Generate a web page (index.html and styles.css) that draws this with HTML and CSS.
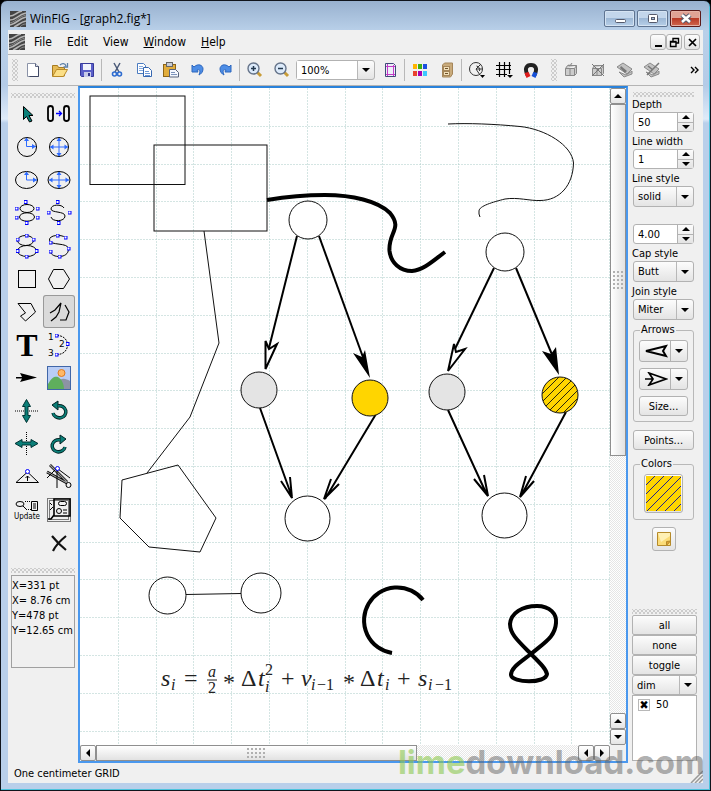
FILE: index.html
```html
<!DOCTYPE html>
<html lang="en">
<head>
  <meta charset="UTF-8">
  <title>WinFIG - [graph2.fig*]</title>
  <link rel="stylesheet" href="styles.css">
</head>
<body>

<svg class="defs" width="0" height="0" aria-hidden="true">
  <defs>
    <marker id="knot" markerWidth="4" markerHeight="4" refX="2" refY="2" markerUnits="userSpaceOnUse">
      <rect x="0.5" y="0.5" width="3" height="3" fill="#fff" stroke="#00f"/>
    </marker>
    <pattern id="hatch" width="8" height="8" patternUnits="userSpaceOnUse">
      <rect width="8" height="8" fill="#ffd500"/>
      <path d="M-1 9L9 -1M-1 1L1 -1M7 9L9 7" stroke="#111" stroke-width="0.9"/>
    </pattern>
    <pattern id="hatchBlue" width="9" height="9" patternUnits="userSpaceOnUse">
      <rect width="9" height="9" fill="#ffd500"/>
      <path d="M-1 10L10 -1M-1 1L1 -1M8 10L10 8" stroke="#22228a"/>
    </pattern>
    <symbol id="logo" viewBox="0 0 16 16">
      <rect width="16" height="16" fill="#444"/>
      <path d="M0 5C5 5 6 1 12 0M0 9C7 9 7 4 16 2M0 14C8 12 8 8 16 6M4 16C9 14 10 11 16 10" fill="none" stroke="#b5b5b5" stroke-width="1.6"/>
      <path d="M0 12C7 10 8 6 16 4M10 16C12 14 13 13 16 13" fill="none" stroke="#888"/>
    </symbol>
  </defs>
</svg>

<div class="window">

  <header class="titlebar">
    <svg class="logo"><use href="#logo"/></svg>
    <h1>WinFIG - [graph2.fig*]</h1>
    <div class="win-buttons">
      <button aria-label="Minimize"><svg width="12" height="12"><rect x="1.5" y="6.5" width="10" height="3" rx="1" fill="#fff" stroke="#555a6c"/></svg></button>
      <button aria-label="Maximize"><svg width="12" height="12"><rect x="1.5" y="1.5" width="9" height="8" rx="1" fill="#fff" stroke="#555a6c"/><rect x="4.5" y="4.5" width="3" height="2" fill="#a8c0dc" stroke="#555a6c"/></svg></button>
      <button class="close" aria-label="Close"><svg width="12" height="12"><path d="M2 2l8 7M10 2l-8 7" stroke="#555a6c" stroke-width="4.5"/><path d="M2 2l8 7M10 2l-8 7" stroke="#fff" stroke-width="2.5"/></svg></button>
    </div>
  </header>

  <nav class="menubar">
    <svg class="logo"><use href="#logo"/></svg>
    <button>File</button>
    <button>Edit</button>
    <button>View</button>
    <button><u>W</u>indow</button>
    <button><u>H</u>elp</button>
    <div class="mdi-buttons">
      <button aria-label="Minimize document"><svg width="11" height="11"><path d="M2 9h7" stroke="#000" stroke-width="2"/></svg></button>
      <button aria-label="Restore document"><svg width="11" height="11"><path d="M4 4V1.5h5.500V6H7.500M4 1.5h6M1.5 4.5h5.500v5h-5.500zM1 5h6.500" fill="none" stroke="#000" stroke-width="1.4"/></svg></button>
      <button class="gap" aria-label="Close document"><svg width="11" height="11"><path d="M2 2l7 7M9 2l-7 7" stroke="#000" stroke-width="1.7"/></svg></button>
    </div>
  </nav>

  <div class="toolbar">
    <span class="grip-v"></span>
    <button aria-label="New"><svg width="16" height="16"><path d="M2.500 1.500h8l3 3v10h-11z" fill="#fff" stroke="#8b93a8"/><path d="M13.500 4v10.500h-9" fill="none" stroke="#3f4763"/><path d="M10.500 1.500v3h3" fill="#d7dcea" stroke="#5d6580"/></svg></button>
    <button aria-label="Open"><svg width="18" height="16"><path d="M1.500 14V3.500h5l1 2h6V14z" fill="#e6bb55" stroke="#a77b20"/><path d="M1.500 14.500l4-7h11l-4 7z" fill="#fbdf87" stroke="#b98a28"/><path d="M9 3c2-2 5-2 6 1M16.500 1v4h-4" fill="none" stroke="#5b7fa8" stroke-width="1.300"/></svg></button>
    <button aria-label="Save"><svg width="16" height="16"><path d="M1.500 1.500h13v13h-12l-1-1z" fill="#5a5fc8" stroke="#36399a"/><rect x="4" y="2" width="8" height="6" fill="#f0f2fc"/><rect x="5" y="10" width="7" height="5" fill="#c7cbe8"/><rect x="9" y="11" width="2" height="3" fill="#30348c"/></svg></button>
    <span class="sep"></span>
    <button aria-label="Cut"><svg width="16" height="16"><path d="M5 1l5 9M11 1L6 10" stroke="#4b5a78" stroke-width="1.500"/><circle cx="5.500" cy="12" r="2" fill="none" stroke="#2e6cd0" stroke-width="1.600"/><circle cx="10.500" cy="12" r="2" fill="none" stroke="#2e6cd0" stroke-width="1.600"/></svg></button>
    <button aria-label="Copy"><svg width="16" height="16"><path d="M1.500 1.500h6l2 2v8h-8z" fill="#fff" stroke="#4a7bc0"/><path d="M3 4.500h4M3 6.500h5M3 8.500h5" stroke="#86aade"/><path d="M7.500 5.500h5l3 3v6h-8z" fill="#fff" stroke="#3566b0"/><path d="M9 9.500h4M9 11.500h5M9 13.500h5" stroke="#6d97d6"/></svg></button>
    <button aria-label="Paste"><svg width="16" height="16"><rect x="0.500" y="2.500" width="12" height="12" fill="#e2ad3c" stroke="#8d6416"/><rect x="3.500" y="0.500" width="6" height="4" fill="#c9cdd6" stroke="#666"/><path d="M6.500 7.500h6l3 3v4.500h-9z" fill="#f4f7fd" stroke="#56627a"/><path d="M8 10.500h4M8 12.500h6" stroke="#7c93ba"/></svg></button>
    <button aria-label="Undo"><svg width="16" height="16"><path d="M4 5c4-4 9-2 9 2 0 3-2 5-4 6 1-3 2-6-2-5l1 2-6 0V3z" fill="#4d8de6" stroke="#2c66bd"/></svg></button>
    <button aria-label="Redo"><svg width="16" height="16"><path d="M12 5C8 1 3 3 3 7c0 3 2 5 4 6-1-3-2-6 2-5l-1 2 6 0V3z" fill="#4d8de6" stroke="#2c66bd"/></svg></button>
    <span class="sep"></span>
    <button aria-label="Zoom in"><svg width="16" height="16"><path d="M10 10l4 4" stroke="#c89c38" stroke-width="3"/><circle cx="6.500" cy="6.500" r="5.500" fill="#dceafa" stroke="#66748a" stroke-width="1.400"/><path d="M4 6.500h5M6.500 4v5" stroke="#23384f" stroke-width="1.500"/></svg></button>
    <button aria-label="Zoom out"><svg width="16" height="16"><path d="M10 10l4 4" stroke="#c89c38" stroke-width="3"/><circle cx="6.500" cy="6.500" r="5.500" fill="#dceafa" stroke="#66748a" stroke-width="1.400"/><path d="M4 6.500h5" stroke="#23384f" stroke-width="1.500"/></svg></button>
    <div class="combo zoom">
      <select aria-label="Zoom"><option>100%</option></select>
    </div>
    <button aria-label="Page frame"><svg width="16" height="16"><path d="M3.500 1.500h8l2 2v11h-10z" fill="#eef0fa" stroke="#3f4a78"/><path d="M5.500 2v12M11.500 3v11M4 4.500h9M4 12.500h9" stroke="#c43cc8"/></svg></button>
    <span class="sep"></span>
    <button aria-label="Palette"><svg width="16" height="14"><path d="M1 1h4v5H1z" fill="#ffb400"/><path d="M6 1h4v5H6z" fill="#3eae14"/><path d="M11 1h4v5h-4z" fill="#1c50e0"/><path d="M1 8h4v5H1z" fill="#e8432e"/><path d="M6 8h4v5H6z" fill="#a800b0"/><path d="M11 8h4v5h-4z" fill="#3cc8ff"/></svg></button>
    <button aria-label="Library"><svg width="14" height="16"><path d="M2.500 3l2-2h8v11l-2 3h-8z" fill="#c9ab7c" stroke="#a5865a"/><rect x="3.500" y="4.500" width="6" height="4" fill="#f1dfb9" stroke="#a5865a"/><rect x="3.500" y="9.500" width="6" height="4" fill="#f1dfb9" stroke="#a5865a"/><path d="M5 6.500h3M5 11.500h3" stroke="#6f5228"/></svg></button>
    <span class="sep"></span>
    <button aria-label="Snap angle"><svg width="18" height="18"><circle cx="8" cy="8" r="6.500" fill="none" stroke="#333"/><path d="M8 8L13 3M8 8l4 6M8 8h6M8.500 5a4 4 0 0 1 3 5" fill="none" stroke="#333"/><path d="M12 14h5l-2.500 3z"/></svg></button>
    <button aria-label="Grid"><svg width="18" height="18"><path d="M4.500 1v15M9.500 1v15M14.500 1v12M1 4.500h15M1 8.500h15M1 13.500h11" stroke="#000" stroke-width="1.200"/><path d="M12 14h6l-3 3z"/></svg></button>
    <button aria-label="Magnet"><svg width="16" height="16"><path d="M4.500 13C1 6 4 3 8 3s7 3 3.500 10" fill="none" stroke="#222" stroke-width="4"/><path d="M1.500 11l4-1 2 4-4 2z" fill="#e01c1c"/><path d="M14.500 11l-4-1-2 4 4 2z" fill="#1650d8"/></svg></button>
    <span class="grip-v second"></span>
    <button aria-label="Group"><svg width="16" height="16"><path d="M2.500 6.500h9v7h-9zM11.500 13.500l2-2v-8l-2 3M2.500 6.500l2-3h9M7 6.500v7M5 3l2 1 2-3" fill="#ccc" stroke="#888"/></svg></button>
    <button aria-label="Ungroup"><svg width="16" height="16"><path d="M2.500 6.500h9v7h-9zM11.500 13.500l2-2v-8l-2 3M2.500 6.500l2-3h9M7 6.500v7" fill="#ccc" stroke="#888"/><path d="M2 2l12 12M14 2L2 14" stroke="#777"/></svg></button>
    <button aria-label="Open compound"><svg width="18" height="16"><path d="M1 5l6-4 9 6-5 5zM3 10l5 5 8-3v-3l-6 4z" fill="#c2c2c2" stroke="#8a8a8a"/><path d="M5 4l6 5-2 2-5-5z" fill="#777"/></svg></button>
    <button aria-label="Close compound"><svg width="18" height="16"><path d="M1 5l6-4 9 6-5 5zM3 10l5 5 8-3v-3l-6 4z" fill="#c2c2c2" stroke="#8a8a8a"/><path d="M16 1L4 13M5 4l5 4" stroke="#777" stroke-width="1.500"/></svg></button>
    <button class="more" aria-label="More tools"><svg width="9" height="9"><path d="M1 1l3 3-3 3M5 1l3 3-3 3" fill="none" stroke="#000" stroke-width="1.400"/></svg></button>
  </div>

  <main class="workspace">

    <aside class="left">
      <span class="grip-h"></span>
      <div class="tools">
        <button aria-label="Select"><svg viewBox="0 0 32 33"><path d="M12.500 9.500v13l3-3 3 5.500 2.500-1-3-5.500h4z" fill="#0b7f78" stroke="#000"/></svg></button>
        <button aria-label="Morph"><svg viewBox="0 0 32 33"><rect x="5" y="9" width="5" height="15" rx="2.500" fill="none" stroke="#000" stroke-width="1.800"/><rect x="21" y="9" width="5" height="15" rx="2.500" fill="none" stroke="#000" stroke-width="1.800"/><path d="M13 16.500h5M16 14l2.500 2.500L16 19" fill="none" stroke="#00f" stroke-width="1.300"/></svg></button>

        <button aria-label="Circle by radius"><svg viewBox="0 0 32 33"><circle cx="16" cy="17" r="9.500" fill="none" stroke="#000"/><path d="M15.500 8v8.500H25" fill="none" stroke="#2e6bff"/><path d="M13 11l2.500-3.500L18 11zM21 14l4 2.500-4 2.500z" fill="#2e6bff"/></svg></button>
        <button aria-label="Circle by diameter"><svg viewBox="0 0 32 33"><circle cx="16" cy="17" r="9.500" fill="none" stroke="#000"/><path d="M16 8v18M7 17h18" stroke="#2e6bff"/><path d="M13.500 11L16 7.500l2.500 3.500zM13.500 23l2.500 3.500 2.500-3.500zM21.500 14.500L25 17l-3.500 2.500zM10.500 14.500L7 17l3.500 2.500z" fill="#2e6bff"/></svg></button>

        <button aria-label="Ellipse by radius"><svg viewBox="0 0 32 33"><ellipse cx="15.500" cy="17" rx="11" ry="8.500" fill="none" stroke="#000"/><path d="M15.500 9v8H26" fill="none" stroke="#2e6bff"/><path d="M13 12l2.500-3.500L18 12zM22 14.500l4 2.500-4 2.500z" fill="#2e6bff"/></svg></button>
        <button aria-label="Ellipse by diameter"><svg viewBox="0 0 32 33"><ellipse cx="16" cy="17" rx="11" ry="8.500" fill="none" stroke="#000"/><path d="M16 9v16M6 17h20" stroke="#2e6bff"/><path d="M13.500 12L16 8.500l2.500 3.500zM13.500 22l2.500 3.500 2.500-3.500zM22.500 14.500L26 17l-3.500 2.500zM9.500 14.500L6 17l3.500 2.500z" fill="#2e6bff"/></svg></button>

        <button aria-label="Closed approximated spline"><svg viewBox="0 0 32 33"><ellipse cx="16" cy="12.500" rx="7" ry="4" fill="none" stroke="#000"/><ellipse cx="16" cy="21" rx="7.500" ry="4.200" fill="none" stroke="#000"/><polyline class="knots" points="14.500,6 5.500,12.500 26.500,12.500 5.500,21.500 26.500,21.500 15.500,27"/></svg></button>
        <button aria-label="Open approximated spline"><svg viewBox="0 0 32 33"><path d="M21 12c-2-4-13-4-13 1 0 4 14 2 14 7 0 6-13 6-14 1" fill="none" stroke="#000"/><polyline class="knots" points="14.500,6 5.500,16.500 26.500,16.500 15.500,27"/></svg></button>

        <button aria-label="Closed interpolated spline"><svg viewBox="0 0 32 33"><ellipse cx="14.500" cy="11.500" rx="8" ry="5" fill="none" stroke="#000"/><ellipse cx="16" cy="22" rx="9.500" ry="5.500" fill="none" stroke="#000"/><polyline class="knots" points="15.500,6.500 6.500,10.500 22.500,10.500 6.500,22 25.500,22 15.500,27.500"/></svg></button>
        <button aria-label="Open interpolated spline"><svg viewBox="0 0 32 33"><path d="M22.500 8.500C18 5 6 6 6.500 11c0 6 19 2 19 9 0 10-17 9-18 3" fill="none" stroke="#000"/><polyline class="knots" points="14.500,6.500 22.500,8.500 7.500,13.500 25.500,19.500 7.500,22.500 16.500,27.500"/></svg></button>

        <button aria-label="Rectangle"><svg viewBox="0 0 32 33"><rect x="7.500" y="8.500" width="17" height="17" fill="none" stroke="#000"/></svg></button>
        <button aria-label="Regular polygon"><svg viewBox="0 0 32 33"><path d="M10.500 7.500h10l6 9.500-6 9.500h-10L5.500 17z" fill="none" stroke="#000"/></svg></button>

        <button aria-label="Polygon"><svg viewBox="0 0 32 33"><path d="M7 8.500h13l4.500 8.500-10 9-5-5 5-3z" fill="none" stroke="#000"/></svg></button>
        <button class="active" aria-label="Polyline"><svg viewBox="0 0 32 33"><path d="M7 18l5-3 6-7-2 9-3 5-5 4M17 25h6l3-8-4-7" fill="none" stroke="#000" stroke-width="1.200"/></svg></button>

        <button aria-label="Text"><svg viewBox="0 0 32 33"><text x="16" y="28" text-anchor="middle" class="big-t">T</text></svg></button>
        <button aria-label="Arc"><svg viewBox="0 0 32 33"><path d="M14 7.500c14 0 14 19 0 19" fill="none" stroke="#000" stroke-dasharray="2 1"/><polyline class="knots" points="13.500,7.500 24.500,16 13.500,26.500"/><g class="digits"><text x="5" y="12">1</text><text x="16" y="19">2</text><text x="5" y="28">3</text></g></svg></button>

        <button aria-label="Arrow"><svg viewBox="0 0 32 33"><path d="M5 16h6l-2-4 17 4.500L9 21l2-3.500H5z"/></svg></button>
        <button aria-label="Picture"><svg viewBox="0 0 32 33"><rect x="4.500" y="5.500" width="23" height="23" fill="#b9cdf5" stroke="#4066a8"/><circle cx="18.500" cy="12" r="3.500" fill="#ffb866" stroke="#e07a1c"/><path d="M14 21c5-5 9-3 13-1v8H16z" fill="#8d93a5"/><path d="M5 23c4-7 7-8 10-7 4 2 6 8 6 12H5z" fill="#5fae5c"/></svg></button>

        <button aria-label="Flip vertical"><svg viewBox="0 0 32 33"><path d="M4 17h24" stroke="#000" stroke-dasharray="1 1"/><path d="M15.500 5.500l4 7h-2.500v9h2.500l-4 7-4-7h2.500v-9h-2.500z" fill="#0b7f78" stroke="#033"/></svg></button>
        <button aria-label="Rotate left"><svg viewBox="0 0 32 33"><path d="M10 19a6.500 6 0 1 0 5-7" fill="none" stroke="#022" stroke-width="3.500"/><path d="M15 7v9l-6-5z" fill="#0b7f78" stroke="#022"/><path d="M10 19a6.500 6 0 1 0 5-7" fill="none" stroke="#0b7f78" stroke-width="1.800"/></svg></button>

        <button aria-label="Flip horizontal"><svg viewBox="0 0 32 33"><path d="M15.500 5v24" stroke="#000" stroke-dasharray="1 1"/><path d="M4 16.500l7-4v2.500h9v-2.500l7 4-7 4v-2.500h-9v2.500z" fill="#0b7f78" stroke="#033"/></svg></button>
        <button aria-label="Rotate right"><svg viewBox="0 0 32 33"><path d="M22 20a6.500 6 0 1 1-5-7" fill="none" stroke="#022" stroke-width="3.500"/><path d="M17 8v9l6-5z" fill="#0b7f78" stroke="#022"/><path d="M22 20a6.500 6 0 1 1-5-7" fill="none" stroke="#0b7f78" stroke-width="1.800"/></svg></button>

        <button aria-label="Add point"><svg viewBox="0 0 32 33"><path d="M5 22.500L16.500 12 27.500 22.500zM16.500 21v-5M14.500 18l2-2 2 2" fill="none" stroke="#000"/><circle cx="16.500" cy="11.500" r="2" fill="#fff" stroke="#00f"/></svg></button>
        <button aria-label="Cut line"><svg viewBox="0 0 32 33"><path d="M7 5l17 17M4 12l20 11" stroke="#000" stroke-width="2.600"/><path d="M7 5l17 17M4 12l20 11" stroke="#999" stroke-width="1.200"/><path d="M14 8L4 18M14 10v18M15 9l12 9" stroke="#000"/><circle cx="25.500" cy="25" r="2.500" fill="none" stroke="#000"/><circle cx="14.500" cy="8.500" r="2" fill="#fff" stroke="#00f"/></svg></button>

        <button aria-label="Update"><svg viewBox="0 0 32 33"><ellipse cx="9" cy="11" rx="4" ry="2.500" fill="none" stroke="#000"/><path d="M12 13l4 4" stroke="#000"/><path d="M14 8.500h5M17 16.500h4" stroke="#000" stroke-dasharray="1 1"/><path d="M20.500 8.500h6v9h-6zM22 11h3M22 13h3M22 15h3" fill="none" stroke="#000"/><text x="16" y="26" text-anchor="middle" class="update">Update</text></svg></button>
        <button aria-label="Compound"><svg viewBox="0 0 32 33"><rect x="4.500" y="5.500" width="23" height="23" fill="none" stroke="#000" stroke-dasharray="1 1"/><rect x="6.500" y="7.500" width="19" height="19" fill="none" stroke="#000" stroke-dasharray="1 1"/><path d="M11 6h16v17H11zM11 22l-3 4h-3" fill="none" stroke="#000" stroke-width="1.600"/><rect x="15.500" y="8.500" width="8" height="4" rx="2" fill="none" stroke="#000"/><circle cx="16" cy="18" r="2.500" fill="none" stroke="#000"/><path d="M20 17h4M20 20h4M7 10l2 2M7 17l3-3" stroke="#000"/></svg></button>

        <span></span>
        <button aria-label="Delete"><svg viewBox="0 0 32 33"><path d="M9 10c4 5 9 10 14 14M23 10c-5 4-10 9-13 15" fill="none" stroke="#111" stroke-width="2.200"/></svg></button>
      </div>
      <span class="grip-h coords-grip"></span>
      <div class="coords">X=331 pt<br>X= 8.76 cm<br>Y=478 pt<br>Y=12.65 cm</div>
    </aside>

    <section class="view">
      <svg class="canvas">
        <g transform="translate(-80 -88)">
          <path class="grid-lines" d="M118 88v900M156 88v900M193 88v900M231 88v900M269 88v900M307 88v900M345 88v900M382 88v900M420 88v900M458 88v900M496 88v900M534 88v900M571 88v900M609 88v900"/>
          <path class="grid-lines" d="M80 126h900M80 164h900M80 201h900M80 239h900M80 277h900M80 315h900M80 353h900M80 390h900M80 428h900M80 466h900M80 504h900M80 542h900M80 579h900M80 617h900M80 655h900M80 693h900M80 731h900"/>

          <!-- boxes, line and polygon -->
          <g class="thin">
            <rect x="90" y="96" width="95" height="88.500"/>
            <rect x="154" y="145" width="113" height="86"/>
            <path d="M204 231l15 112-29 74-43 56"/>
            <path d="M122 480l56-15 38 53-16 34-51-5-29-29z"/>
            <path d="M186 594.500l55-1"/>
            <circle cx="167.500" cy="595.500" r="18.500"/>
            <circle cx="261" cy="593" r="20"/>
            <path d="M448 124C468 123 494 124 520 126.500C545 129 572 145 573.500 163C573 185 560 200.500 540 200.500C530 201 518 197 505 199C493 202 479 206 479 211V214L480 217"/>
          </g>

          <!-- left graph -->
          <g class="edge">
            <path d="M297 236l-28 112"/>
            <path d="M265.500 341l0 28 11.500-25-8 5z" fill="#fff"/>
            <path d="M319 236l45 124"/>
            <path d="M260 408l32 89M281 481l11 17-2-21"/>
            <path d="M376 414l-51 85M331 479l-7 20 15-15"/>
          </g>
          <path d="M353 353l9 4 3-7 5 28z"/>
          <g class="node">
            <circle cx="308" cy="220" r="19"/>
            <circle cx="259" cy="390" r="18" fill="#e4e4e4"/>
            <circle cx="370" cy="398" r="18" fill="#ffd500"/>
            <circle cx="307.500" cy="518.500" r="22.500"/>
          </g>

          <!-- right graph -->
          <g class="edge">
            <path d="M494 268l-40 83"/>
            <path d="M454 344l-6 27 17-22-9 3z" fill="#fff"/>
            <path d="M516 268l37 89"/>
            <path d="M448 410l39 85M474 479l14 17-4-21"/>
            <path d="M566 412l-45 84M526 476l-6 21 14-16"/>
          </g>
          <path d="M542 351l9 3 5-7 3 28z"/>
          <g class="node">
            <circle cx="505" cy="252" r="19"/>
            <circle cx="447" cy="392" r="18" fill="#e4e4e4"/>
            <circle cx="560" cy="395" r="18" fill="url(#hatch)"/>
            <circle cx="504.500" cy="515.500" r="22.500"/>
          </g>

          <!-- thick splines -->
          <g class="thick">
            <path d="M267 200C285 197 305 195 325 195C352 195 378 201 390 213C403 229 388 232 389.500 251C391 263 400 271 412 271C424 270 434 260 445 252"/>
            <path d="M423 600A33 33 0 1 0 392 653"/>
            <path d="M531 654C518 641 510 634 510 624C511 613 522 606 537 606C550 606 557 614 556 623C555 637 545 642 531 654C518 664 511 668 511 675C512 683 546 684 547 674C546 669 541 664 531 654z"/>
          </g>

          <!-- LaTeX text object -->
          <g class="formula">
            <text y="686"><tspan class="it" x="161">s</tspan><tspan class="it sm" x="171" y="690">i</tspan><tspan x="184" y="686">=</tspan></text>
            <text class="it sm" x="208" y="677">a</text>
            <text class="sm" x="208" y="693">2</text>
            <path d="M207 680h10" stroke="#222"/>
            <text y="686"><tspan x="223" y="690">*</tspan><tspan x="241" y="686">Δ</tspan><tspan class="it" x="258">t</tspan></text>
            <text class="sm" x="265" y="675">2</text>
            <text class="it sm" x="265" y="692">i</text>
            <text y="686"><tspan x="281">+</tspan><tspan class="it" x="301">v</tspan><tspan class="it sm" x="311" y="690">i</tspan><tspan class="sm" x="317">−1</tspan><tspan x="343" y="690">*</tspan><tspan x="360" y="686">Δ</tspan><tspan class="it" x="377">t</tspan><tspan class="it sm" x="385" y="690">i</tspan><tspan x="397" y="686">+</tspan><tspan class="it" x="418">s</tspan><tspan class="it sm" x="428" y="690">i</tspan><tspan class="sm" x="435">−1</tspan></text>
          </g>
        </g>
      </svg>

      <div class="scroll vertical">
        <button aria-label="Scroll up"><i class="tri up"></i></button>
        <div class="thumb"><span class="dots"></span></div>
        <div class="track"></div>
        <button aria-label="Scroll up"><i class="tri up"></i></button>
        <button aria-label="Scroll down"><i class="tri down"></i></button>
      </div>
      <div class="scroll horizontal">
        <button aria-label="Scroll left"><i class="tri prev"></i></button>
        <div class="thumb"><span class="dots"></span></div>
        <div class="track"></div>
        <button aria-label="Scroll left"><i class="tri prev"></i></button>
        <button aria-label="Scroll right"><i class="tri next"></i></button>
      </div>
    </section>

    <aside class="right">
      <div class="props">
        <span class="grip-h"></span>
        <label for="depth">Depth</label>
        <div class="spin"><input id="depth" value="50"><div><button aria-label="Depth up"><i class="tri up"></i></button><button aria-label="Depth down"><i class="tri down"></i></button></div></div>
        <label for="lineWidth">Line width</label>
        <div class="spin"><input id="lineWidth" value="1"><div><button aria-label="Width up"><i class="tri up"></i></button><button aria-label="Width down"><i class="tri down"></i></button></div></div>
        <label for="lineStyle">Line style</label>
        <div class="combo"><select id="lineStyle"><option>solid</option></select></div>
        <div class="spin dash"><input aria-label="Dash length" value="4.00"><div><button aria-label="Dash up"><i class="tri up"></i></button><button aria-label="Dash down"><i class="tri down"></i></button></div></div>
        <label for="capStyle">Cap style</label>
        <div class="combo"><select id="capStyle"><option>Butt</option></select></div>
        <label for="joinStyle">Join style</label>
        <div class="combo"><select id="joinStyle"><option>Miter</option></select></div>

        <fieldset class="arrows">
          <legend>Arrows</legend>
          <button class="split" aria-label="Backward arrow"><svg width="24" height="14"><path d="M2 7l20-5-3 5 3 5z" fill="none" stroke="#000" stroke-width="2"/></svg><i class="tri down"></i></button>
          <button class="split" aria-label="Forward arrow"><svg width="24" height="14"><path d="M1 7h8M5 1l17 6-17 6 4-6z" fill="none" stroke="#000" stroke-width="1.700"/></svg><i class="tri down"></i></button>
          <button>Size...</button>
        </fieldset>
        <button class="points">Points...</button>
        <fieldset class="colors">
          <legend>Colors</legend>
          <button class="swatch" aria-label="Fill color"><svg width="35" height="35"><rect width="35" height="35" fill="url(#hatchBlue)"/></svg></button>
        </fieldset>
        <button class="note" aria-label="Comment"><svg width="14" height="14"><path d="M0.500 0.500h13v13h-13z" fill="#fbdc78" stroke="#b58a2a"/><path d="M1 1h12v3L4 10z" fill="#fff0b4"/><path d="M13.500 9l-4 4.500v-4z" fill="#e0a030" stroke="#b58a2a"/></svg></button>
      </div>

      <div class="depths">
        <span class="grip-h"></span>
        <button>all</button>
        <button>none</button>
        <button>toggle</button>
        <div class="combo"><select aria-label="Inactive layers"><option>dim</option></select></div>
        <div class="list"><label><input type="checkbox" checked>50</label></div>
      </div>
    </aside>
  </main>

  <footer class="status">
    <span>One centimeter GRID</span>
    <svg width="13" height="13"><path d="M1 13L13 1M5 13l8-8M9 13l4-4" stroke="#999" stroke-width="1.500"/></svg>
  </footer>

  <div class="watermark"><span>lime</span>download.com</div>
</div>

</body>
</html>
```
FILE: styles.css
```css
* {margin:0;padding:0;box-sizing:border-box;}
body {
  background: #000;
  color: #000;
  font-family: "DejaVu Sans Condensed", "Noto Sans", sans-serif;
  font-size: 11px;
  line-height: 15px;
}
button, select, input {
  font: inherit;
  color: inherit;
  background: none;
  border: none;
}
svg { display: block; flex: none; }
.defs { position: absolute; }

/* window frame */
.window {
  position: relative;
  min-height: 100vh;
  display: flex;
  flex-direction: column;
  padding: 0 7px 7px;
  border: 1px solid #10141c;
  border-radius: 7px 7px 0 0;
  background: linear-gradient(#98b1cf, #b9d0e9 30px, #b4cbe7 84px, #dfebf9 118px, #b9cfea 122px);
  box-shadow: inset -1px -1px #4cc3dc;
}
.titlebar {
  height: 29px;
  display: flex;
  align-items: center;
  gap: 4px;
  padding: 6px 2px 0;
}
.titlebar h1 {
  flex: 1;
  font: 12px/16px "Open Sans", "Noto Sans", sans-serif;
}
.logo { width: 16px; height: 16px; }
.win-buttons { display: flex; gap: 2px; }
.win-buttons button {
  width: 31px;
  height: 17px;
  display: flex;
  justify-content: center;
  align-items: center;
  border: 1px solid #5f7491;
  border-radius: 2px;
  background: linear-gradient(#c3d6eb 45%, #9db8d6 50%, #b7cfe8);
  box-shadow: inset 0 0 0 1px #d5e3f2;
}
.win-buttons .close {
  border-color: #5c1a1a;
  background: linear-gradient(#e0a295 45%, #b93a27 50%, #d0664e);
  box-shadow: inset 0 0 0 1px #e5b1a6;
}

.menubar {
  height: 25px;
  display: flex;
  align-items: center;
  padding: 0 3px 0 1px;
  gap: 15px;
  background: #f0f0f0;
  border-bottom: 1px solid #b4b4b4;
}
.menubar .logo { margin-right: -6px; }
.menubar > button { font-size: 12px; }
.mdi-buttons { display: flex; margin-left: auto; }
.mdi-buttons button, .arrows button, .points, .note, .swatch, .depths button {
  display: flex;
  justify-content: center;
  align-items: center;
  border: 1px solid #b2b2b2;
  border-radius: 3px;
  background: linear-gradient(#fcfcfc, #e4e4e4);
}
.mdi-buttons button { width: 16px; height: 16px; }
.mdi-buttons .gap { margin-left: 2px; }

.toolbar {
  height: 31px;
  display: flex;
  align-items: center;
  padding-left: 4px;
  background: #f0f0f0;
  border-bottom: 1px solid #b4b4b4;
}
.toolbar > button {
  width: 27px;
  height: 28px;
  display: flex;
  justify-content: center;
  align-items: center;
}
.toolbar .more { margin-left: auto; width: 17px; }
.sep {
  width: 1px;
  height: 22px;
  margin: 0 1px;
  background: #b8b8b8;
}
.grip-v, .grip-h {
  background:
    radial-gradient(#ccc 1px, transparent 1px) 0 0 / 4px 4px,
    radial-gradient(#ccc 1px, transparent 1px) 2px 2px / 4px 4px;
}
.grip-v { width: 6px; height: 22px; margin-right: 1px; }
.grip-v.second { margin: 0 0 0 7px; }
.grip-h { display: block; height: 5px; }

/* combo and spin boxes */
.combo {
  display: grid;
  height: 21px;
  align-items: center;
  border: 1px solid #b2b2b2;
  border-radius: 3px;
  background: linear-gradient(#fcfcfc, #e4e4e4);
}
.combo select {
  grid-area: 1 / 1;
  width: 100%;
  height: 100%;
  padding-left: 4px;
  appearance: none;
  border-right: 16px solid transparent;
  background: linear-gradient(#b8b8b8, #b8b8b8) right / 1px 100% no-repeat padding-box;
}
.combo::after {
  content: "";
  grid-area: 1 / 1;
  justify-self: end;
  margin-right: 4px;
  border: 4px solid transparent;
  border-top-color: #000;
  border-bottom: none;
  pointer-events: none;
}
.zoom { width: 79px; height: 20px; margin: 0 1px; }
.zoom select { background-color: #fff; }

.spin {
  display: flex;
  height: 20px;
  border: 1px solid #b2b2b2;
  border-radius: 3px;
  background: #fff;
}
.spin input { flex: 1; min-width: 0; padding-left: 4px; }
.spin div {
  width: 16px;
  display: flex;
  flex-direction: column;
  border-left: 1px solid #b2b2b2;
  background: linear-gradient(#fcfcfc, #e4e4e4);
}
.spin button {
  flex: 1;
  display: flex;
  justify-content: center;
  align-items: center;
}
.spin button + button { border-top: 1px solid #b2b2b2; }
.tri { border: 4px solid transparent; }
.tri.up { border-bottom-color: #000; border-top: none; }
.tri.down { border-top-color: #000; border-bottom: none; }
.tri.prev { border-right-color: #000; border-left: none; }
.tri.next { border-left-color: #000; border-right: none; }

.workspace {
  flex: 1;
  display: flex;
  background: #f0f0f0;
}

/* left tools */
.left { width: 70px; padding: 7px 3px 0; }
.tools {
  display: grid;
  grid-template-columns: 32px 32px;
  grid-auto-rows: 33px;
  margin-top: -1px;
}
.tools svg { width: 32px; height: 33px; overflow: visible; }
.tools .active {
  background: #dadada;
  box-shadow: inset 0 0 0 1px #999;
  border-radius: 3px;
}
.knots { fill: none; marker: url(#knot); }
.big-t { font: bold 32px "Liberation Serif", serif; }
.digits { font: 9px "DejaVu Sans", sans-serif; }
.update { font: 8px "DejaVu Sans Condensed", sans-serif; }
.coords-grip { margin-top: 9px; }
.coords {
  height: 93px;
  margin-top: 2px;
  padding: 2px 0;
  border: 1px solid #a0a0a0;
  white-space: nowrap;
}

/* drawing view */
.view {
  flex: 1;
  min-width: 0;
  display: grid;
  grid-template-columns: 1fr 16px;
  grid-template-rows: 1fr 16px;
  border: 2px solid #4a98ee;
  border-top-color: #2a82da;
}
.canvas { width: 100%; height: 100%; background: #fff; }
.grid-lines { stroke: #a9cbc6; stroke-width: 1; stroke-dasharray: 1 2; fill: none; transform: translate(0.5px, 0.5px); }
.thin { fill: none; stroke: #111; }
.node { fill: #fff; stroke: #111; }
.edge { fill: none; stroke: #000; stroke-width: 2; }
.thick { fill: none; stroke: #000; stroke-width: 4; }
.formula { font: 24px "Liberation Serif", serif; fill: #222; }
.formula .it { font-style: italic; }
.formula .sm { font-size: 16px; }

.scroll {
  display: flex;
  background: repeating-conic-gradient(#fff 0 25%, #e6e6e6 0 50%) 0 0 / 2px 2px;
}
.vertical { flex-direction: column; }
.scroll button {
  width: 16px;
  height: 16px;
  display: flex;
  justify-content: center;
  align-items: center;
  border: 1px solid #8f8f8f;
  border-radius: 2px;
  background: linear-gradient(#fff, #e4e4e4);
}
.thumb {
  flex: 351;
  display: flex;
  justify-content: center;
  align-items: center;
  border: 1px solid #8f8f8f;
  background: linear-gradient(90deg, #fff, #e2e2e2);
}
.track { flex: 258; }
.horizontal .thumb { flex: 320; background: linear-gradient(#fff, #e2e2e2); }
.horizontal .track { flex: 162; }
.dots {
  width: 12px;
  height: 20px;
  background: radial-gradient(#b0b0b0 1px, transparent 1px) 0 0 / 4px 4px;
}
.horizontal .dots { width: 20px; height: 12px; }

/* right docks */
.right {
  width: 75px;
  display: flex;
  flex-direction: column;
  justify-content: space-between;
}
.props { padding: 6px 9px 0 5px; }
.props > .grip-h { margin-bottom: -2px; }
.props > label { display: block; height: 17px; line-height: 20px; margin-left: -1px; white-space: nowrap; }
.props .dash { margin-top: 17px; }
fieldset {
  border: 1px solid #b8b8b8;
  border-radius: 3px;
  padding: 3px 5px 5px;
  min-width: 0;
}
legend { height: 14px; line-height: 14px; margin-left: 1px; padding: 0 1px; }
.arrows { margin-top: 3px; }
.arrows button { width: 100%; height: 20px; }
.arrows .split {
  height: 22px;
  margin-bottom: 6px;
  justify-content: space-between;
  padding: 0 4px;
  background:
    linear-gradient(#b2b2b2, #b2b2b2) 30px 0 / 1px 100% no-repeat,
    linear-gradient(#fcfcfc, #e4e4e4);
}
.points { width: 100%; height: 20px; margin: 8px 0 7px; }
.swatch { width: 39px; height: 39px; margin: 0 auto 1px; }
.note { width: 24px; height: 24px; margin: 7px auto 0; }

.depths { padding: 0 6px 2px 4px; }
.depths .grip-h { margin-bottom: 1px; }
.depths button { width: 100%; height: 20px; border-radius: 2px; }
.depths .combo { height: 20px; }
.list {
  height: 66px;
  padding: 1px 5px;
  border: 1px solid #b2b2b2;
  background: #fff;
}
.list label { display: flex; align-items: center; gap: 6px; }
.list input {
  width: 12px;
  height: 12px;
  appearance: none;
  border: 1px solid #b8b8b8;
  display: grid;
  place-items: center;
}
.list input:checked::before { content: "✖"; font-size: 12px; line-height: 10px; }

.status {
  height: 20px;
  display: flex;
  justify-content: space-between;
  align-items: end;
  padding-left: 6px;
  background: #f0f0f0;
}
.status span { align-self: center; }

.watermark {
  position: absolute;
  right: 5px;
  bottom: 8px;
  font: 700 33px/40px Inter, sans-serif;
  color: rgba(100, 100, 100, 0.52);
  pointer-events: none;
}
.watermark span { color: rgba(140, 200, 80, 0.6); }
```
